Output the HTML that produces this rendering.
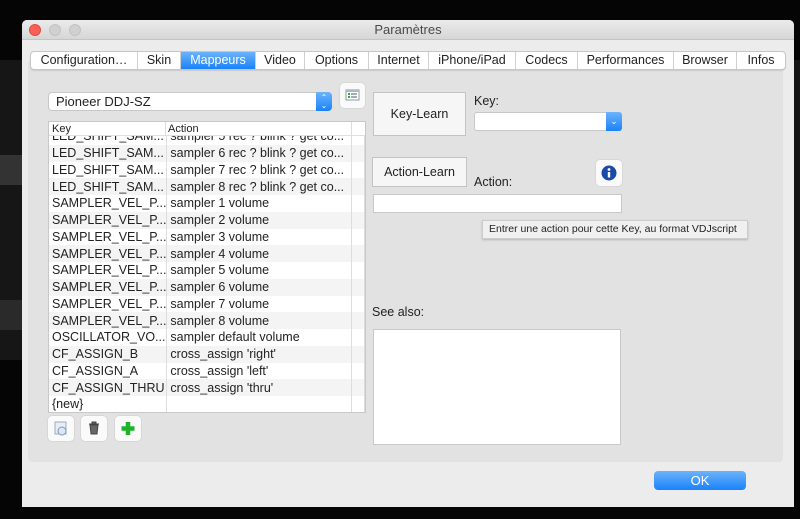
<!DOCTYPE html>
<html><head><meta charset="utf-8"><style>
*{box-sizing:border-box;margin:0;padding:0}
body{width:800px;height:519px;background:#050505;position:relative;overflow:hidden;font-family:"Liberation Sans",sans-serif;font-size:12px;color:#222}
.a{position:absolute}
.win{left:22px;top:20px;width:772px;height:487px;background:#ececec;border-radius:5px 5px 0 0;overflow:hidden}
.title{left:0;top:0;width:772px;height:20px;background:linear-gradient(#ebebeb,#d6d6d6);border-bottom:1px solid #c4c4c4;text-align:center;line-height:20px;font-size:13px;color:#4a4a4a}
.dot{top:4px;width:12px;height:12px;border-radius:50%;background:#d0d0d0;border:1px solid #c2c2c2}
.panel{left:6px;top:40px;width:755px;height:402px;background:#e2e2e2;border-radius:4px}
.tabs{left:8px;top:31px;height:19px;display:flex;background:#fff;border:1px solid #c6c6c6;border-radius:4px;overflow:hidden;box-shadow:0 1px 1px rgba(0,0,0,.1)}
.tabs div{line-height:17px;font-size:12.5px;text-align:center;border-right:1px solid #d0d0d0;color:#222}
.tabs .on{background:linear-gradient(#6cb3fa,#1a82fb);color:#fff}
.btn{background:#f6f6f6;border:1px solid #c3c3c3;text-align:center;font-size:12.5px}
.ib{background:#fafafa;border-radius:4px;box-shadow:0 0 1px rgba(0,0,0,.3)}
table{border-collapse:collapse;width:100%}
td{height:16.75px;font-size:12.5px;padding-left:3px;white-space:nowrap;overflow:hidden;border-right:1px solid #ddd}
tr:nth-child(odd) td{background:#fff}tr:nth-child(even) td{background:#f4f4f4}
</style></head><body>
<div class="a" style="left:0;top:60px;width:22px;height:300px;background:#161616"></div>
<div class="a" style="left:0;top:155px;width:22px;height:30px;background:#333"></div>
<div class="a" style="left:0;top:300px;width:22px;height:30px;background:#2a2a2a"></div>
<div class="a" style="left:786px;top:60px;width:14px;height:300px;background:#141414"></div>
<div class="a win">
 <div class="a title">Paramètres</div>
 <div class="a dot" style="left:7px;background:#fc5f57;border-color:#de4a42"></div>
 <div class="a dot" style="left:27px"></div>
 <div class="a dot" style="left:47px"></div>
 <div class="a panel"></div>
 <div class="a tabs">
  <div style="width:107px">Configuration…</div><div style="width:43px">Skin</div><div class="on" style="width:75px">Mappeurs</div><div style="width:49px">Video</div><div style="width:64px">Options</div><div style="width:60px">Internet</div><div style="width:87px">iPhone/iPad</div><div style="width:62px">Codecs</div><div style="width:96px">Performances</div><div style="width:63px">Browser</div><div style="width:48px;border:none">Infos</div>
 </div>
</div>
<div class="a" style="left:48px;top:92px;width:284px;height:19px;background:#fff;border:1px solid #c8c8c8;border-radius:4px;font-size:13px;line-height:17px;padding-left:7px">Pioneer DDJ-SZ</div>
<div class="a" style="left:316px;top:92px;width:16px;height:19px;background:linear-gradient(#6cb3fa,#1a82fb);border-radius:0 4px 4px 0;color:#fff;font-size:8px;line-height:8px;text-align:center;padding-top:2px">⌃<br>⌄</div>
<div class="a ib" style="left:340px;top:83px;width:25px;height:25px"><svg width="25" height="25"><rect x="6" y="7" width="13" height="10" fill="#fff" stroke="#8a9aa8"/><rect x="6" y="7" width="13" height="2" fill="#aabbc8"/><rect x="8" y="10" width="2" height="2" fill="#3a3"/><rect x="8" y="13" width="2" height="2" fill="#3a3"/><path d="M11 11h6M11 14h6" stroke="#556"/></svg></div>
<div class="a" style="left:48px;top:121px;width:318px;height:292px;background:#fff;border:1px solid #c8c8c8;overflow:hidden">
 <div class="a" style="left:0;top:6px;width:316px">
 <table><colgroup><col style="width:117px"><col style="width:185px"><col></colgroup>
 <tr><td>LED_SHIFT_SAM...</td><td>sampler 5 rec ? blink ? get co...</td><td></td></tr>
 <tr><td>LED_SHIFT_SAM...</td><td>sampler 6 rec ? blink ? get co...</td><td></td></tr>
 <tr><td>LED_SHIFT_SAM...</td><td>sampler 7 rec ? blink ? get co...</td><td></td></tr>
 <tr><td>LED_SHIFT_SAM...</td><td>sampler 8 rec ? blink ? get co...</td><td></td></tr>
 <tr><td>SAMPLER_VEL_P...</td><td>sampler 1 volume</td><td></td></tr>
 <tr><td>SAMPLER_VEL_P...</td><td>sampler 2 volume</td><td></td></tr>
 <tr><td>SAMPLER_VEL_P...</td><td>sampler 3 volume</td><td></td></tr>
 <tr><td>SAMPLER_VEL_P...</td><td>sampler 4 volume</td><td></td></tr>
 <tr><td>SAMPLER_VEL_P...</td><td>sampler 5 volume</td><td></td></tr>
 <tr><td>SAMPLER_VEL_P...</td><td>sampler 6 volume</td><td></td></tr>
 <tr><td>SAMPLER_VEL_P...</td><td>sampler 7 volume</td><td></td></tr>
 <tr><td>SAMPLER_VEL_P...</td><td>sampler 8 volume</td><td></td></tr>
 <tr><td>OSCILLATOR_VO...</td><td>sampler default volume</td><td></td></tr>
 <tr><td>CF_ASSIGN_B</td><td>cross_assign 'right'</td><td></td></tr>
 <tr><td>CF_ASSIGN_A</td><td>cross_assign 'left'</td><td></td></tr>
 <tr><td>CF_ASSIGN_THRU</td><td>cross_assign 'thru'</td><td></td></tr>
 <tr><td>{new}</td><td></td><td></td></tr>
 </table></div>
 <div class="a" style="left:0;top:0;width:316px;height:14px;background:#fff;border-bottom:1px solid #e0e0e0;font-size:11px;line-height:14px">
  <span class="a" style="left:3px">Key</span><span class="a" style="left:119px">Action</span>
  <span class="a" style="left:116px;top:0;width:1px;height:14px;background:#ddd"></span><span class="a" style="left:302px;top:0;width:1px;height:14px;background:#ddd"></span>
 </div>
</div>
<div class="a ib" style="left:48px;top:416px;width:26px;height:25px"><svg width="26" height="25"><rect x="7" y="6" width="11" height="12" fill="#e8eef6" stroke="#9ab"/><circle cx="14" cy="15" r="4" fill="#dde6f2" stroke="#7a9ac0"/></svg></div>
<div class="a ib" style="left:81px;top:416px;width:26px;height:25px"><svg width="26" height="25"><path d="M8 8h10M11 8V6h4v2M9 9l1 9h6l1-9z" fill="#666" stroke="#444" stroke-width="1"/></svg></div>
<div class="a ib" style="left:115px;top:416px;width:26px;height:25px"><svg width="26" height="25"><path d="M13 6v13M6.5 12.5h13" stroke="#1eb42a" stroke-width="4.5"/></svg></div>
<div class="a btn" style="left:373px;top:92px;width:93px;height:44px;line-height:42px">Key-Learn</div>
<div class="a" style="left:474px;top:94px;font-size:12.5px">Key:</div>
<div class="a" style="left:474px;top:112px;width:148px;height:19px;background:#fff;border:1px solid #c8c8c8;border-radius:3px"></div>
<div class="a" style="left:606px;top:112px;width:16px;height:19px;background:linear-gradient(#6cb3fa,#1a82fb);border-radius:0 3px 3px 0;color:#fff;font-size:9px;text-align:center;line-height:18px">⌄</div>
<div class="a btn" style="left:372px;top:157px;width:95px;height:30px;line-height:28px">Action-Learn</div>
<div class="a" style="left:474px;top:175px;font-size:12.5px">Action:</div>
<div class="a ib" style="left:596px;top:160px;width:26px;height:26px"><svg width="26" height="26"><circle cx="13" cy="13" r="7.5" fill="#1a4aa8"/><rect x="11.8" y="12" width="2.4" height="5.5" fill="#fff"/><circle cx="13" cy="9.5" r="1.4" fill="#fff"/></svg></div>
<div class="a" style="left:373px;top:194px;width:249px;height:19px;background:#fff;border:1px solid #c8c8c8"></div>
<div class="a" style="left:482px;top:220px;width:266px;height:19px;background:#f0f0f0;border:1px solid #ccc;box-shadow:0 1px 2px rgba(0,0,0,.2);font-size:10.5px;line-height:17px;padding-left:6px;white-space:nowrap;overflow:hidden">Entrer une action pour cette Key, au format VDJscript</div>
<div class="a" style="left:372px;top:305px;font-size:12.5px">See also:</div>
<div class="a" style="left:373px;top:329px;width:248px;height:116px;background:#fff;border:1px solid #c8c8c8"></div>
<div class="a" style="left:654px;top:471px;width:92px;height:19px;background:linear-gradient(#6cb3fa,#1a82fb);border-radius:4px;color:#fff;text-align:center;line-height:19px;font-size:13px">OK</div>
</body></html>
